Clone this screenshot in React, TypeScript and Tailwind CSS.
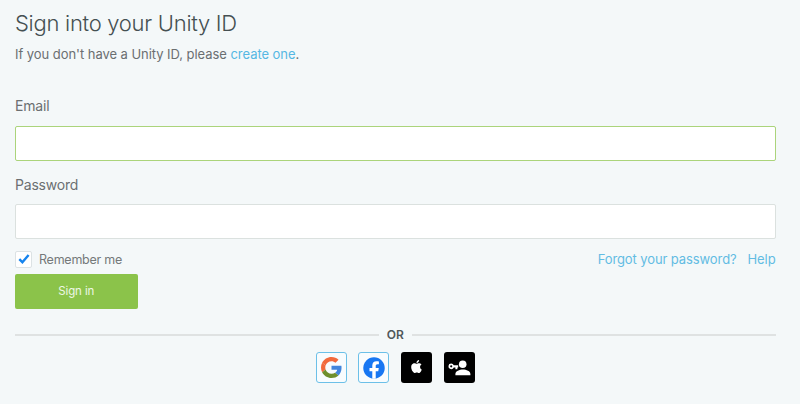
import type { ReactNode } from "react";

function GoogleLogo() {
  return (
    <svg viewBox="0 0 48 48" className="h-[21px] w-[21px]">
      <path fill="#f26a3d" d="M24 9.5c3.54 0 6.71 1.22 9.21 3.6l6.85-6.85C35.9 2.38 30.47 0 24 0 14.62 0 6.51 5.38 2.56 13.22l7.98 6.19C12.43 13.72 17.74 9.5 24 9.5z" />
      <path fill="#4285dc" d="M46.98 24.55c0-1.57-.15-3.09-.38-4.55H24v9.02h12.94c-.58 2.96-2.26 5.48-4.78 7.18l7.73 6c4.51-4.18 7.09-10.36 7.09-17.65z" />
      <path fill="#f26a3d" d="M10.53 28.59A14.5 14.5 0 0 1 9.77 24c0-1.6.27-3.14.76-4.59l-7.98-6.19A24 24 0 0 0 0 24c0 3.88.92 7.54 2.56 10.78z" />
      <path fill="#6f8f2c" d="M24 48c6.48 0 11.93-2.13 15.89-5.81l-7.73-6c-2.15 1.45-4.92 2.3-8.16 2.3-6.26 0-11.57-4.22-13.47-9.91l-7.98 6.19C6.51 42.62 14.62 48 24 48z" />
    </svg>
  );
}

function FacebookLogo() {
  return (
    <svg viewBox="0 0 24 24" className="h-[22px] w-[22px]">
      <circle cx="12" cy="12" r="11.7" fill="#1877f2" />
      <path fill="#fff" d="M10.13 23.6v-8.1H7.08v-3.5h3.05V9.4c0-3 1.79-4.67 4.53-4.67 1.31 0 2.69.24 2.69.24v2.95h-1.52c-1.49 0-1.95.93-1.95 1.88V12h3.32l-.53 3.5h-2.79v8.1a12 12 0 0 1-3.75 0z" />
    </svg>
  );
}

function AppleLogo() {
  return (
    <svg viewBox="0 0 24 24" className="mb-[3px] h-[13px] w-[13px]" fill="#fff">
      <path d="M12.15 6.9c-.95 0-2.42-1.08-3.96-1.04-2.04.03-3.91 1.18-4.96 3.01-2.12 3.68-.55 9.1 1.52 12.09 1.01 1.45 2.21 3.09 3.79 3.04 1.52-.07 2.09-.99 3.94-.99 1.83 0 2.35.99 3.96.95 1.64-.03 2.68-1.48 3.68-2.95 1.16-1.69 1.64-3.33 1.66-3.41-.04-.01-3.18-1.22-3.22-4.86-.03-3.04 2.48-4.49 2.6-4.56-1.43-2.09-3.62-2.32-4.39-2.38-2-.16-3.68 1.09-4.61 1.09zM15.53 3.83c.84-1.01 1.4-2.43 1.25-3.83-1.21.05-2.66.81-3.53 1.82-.78.9-1.45 2.34-1.27 3.71 1.34.1 2.71-.69 3.56-1.7" />
    </svg>
  );
}

function KeyUserLogo() {
  return (
    <svg viewBox="0 0 23 16" className="h-4 w-[23px]" fill="#fff">
      <circle cx="14.7" cy="4.3" r="3.8" />
      <path d="M7.4 15.3v-1.2c0-2.9 4.1-4.5 7.5-4.5s7.5 1.6 7.5 4.5v1.2z" />
      <path fillRule="evenodd" d="M3.2 3.5a2.8 2.8 0 0 1 2.6 1.8h4.4v2.1h-.8v1.9H7.4V7.4H5.8A2.8 2.8 0 1 1 3.2 3.5zm0 1.7a1.1 1.1 0 1 0 0 2.2 1.1 1.1 0 0 0 0-2.2z" />
    </svg>
  );
}

function Provider({ label, dark, children }: { label: string; dark?: boolean; children: ReactNode }) {
  return (
    <button
      aria-label={label}
      className={`flex h-[31px] w-[31px] items-center justify-center rounded-[3px] ${
        dark ? "bg-black" : "border border-[#6cc0e8] bg-[#f8fcfe]"
      }`}
    >
      {children}
    </button>
  );
}

export default function App() {
  return (
    <main className="h-[404px] w-[800px] overflow-hidden bg-[#f4f8f9] pr-[24.5px] pl-[15px] font-['Inter',sans-serif] text-[#6b6f71]">
      <h1 className="pt-2 text-[22px] leading-[30px] font-light tracking-[-0.28px] text-[#455052]">Sign into your Unity ID</h1>
      <p className="mt-[6px] text-[13px] leading-5 tracking-[-0.05px]">
        If you don't have a Unity ID, please <a className="text-[#55b7e3]">create one</a>.
      </p>
      <form>
        <label className="mt-8 block text-[14px] leading-5 tracking-[-0.2px]">Email</label>
        <input aria-label="Email" className="mt-[10px] block h-[35px] w-full rounded-[2px] border border-[#abd47b] bg-white outline-none" />
        <label className="mt-[14px] block text-[14px] leading-5 tracking-[-0.2px]">Password</label>
        <input aria-label="Password" className="mt-[9px] block h-[35px] w-full rounded-[2px] border border-[#dbe1df] bg-white outline-none" />
        <div className="mt-[10px] flex h-5 items-center justify-between">
          <div className="flex items-center gap-[7px] text-[12.5px] tracking-[-0.25px] text-[#75797a]">
            <span className="flex h-[17px] w-[17px] items-center justify-center rounded-[2px] border border-[#dce2e4] bg-white">
              <svg viewBox="0 0 12 12" className="h-3 w-3" fill="none" stroke="#1684ee" strokeWidth="2.4">
                <path d="M1.3 6.2 4.4 9.2 10.6 2" />
              </svg>
            </span>
            <span className="pt-[2px]">Remember me</span>
          </div>
          <div className="flex gap-[11px] pt-[2px] text-[13px] tracking-[-0.1px] text-[#62bce3]">
            <a>Forgot your password?</a>
            <a>Help</a>
          </div>
        </div>
        <button type="button" className="mt-[5px] block h-[35px] w-[122.5px] rounded-[2px] bg-[#8bc34a] pt-px text-[11.5px] tracking-[-0.1px] text-[#eef7e4]">
          Sign in
        </button>
      </form>
      <div className="mt-[16px] flex h-5 items-center gap-2 text-[12px] font-semibold text-[#4f5759]">
        <span className="h-[2px] flex-1 bg-[#dfe2e2]" />
        OR
        <span className="h-[2px] flex-1 bg-[#dfe2e2]" />
      </div>
      <div className="mt-[7px] flex justify-center gap-[11.7px]">
        <Provider label="Google"><GoogleLogo /></Provider>
        <Provider label="Facebook"><FacebookLogo /></Provider>
        <Provider label="Apple" dark><AppleLogo /></Provider>
        <Provider label="Single sign-on" dark><KeyUserLogo /></Provider>
      </div>
    </main>
  );
}
